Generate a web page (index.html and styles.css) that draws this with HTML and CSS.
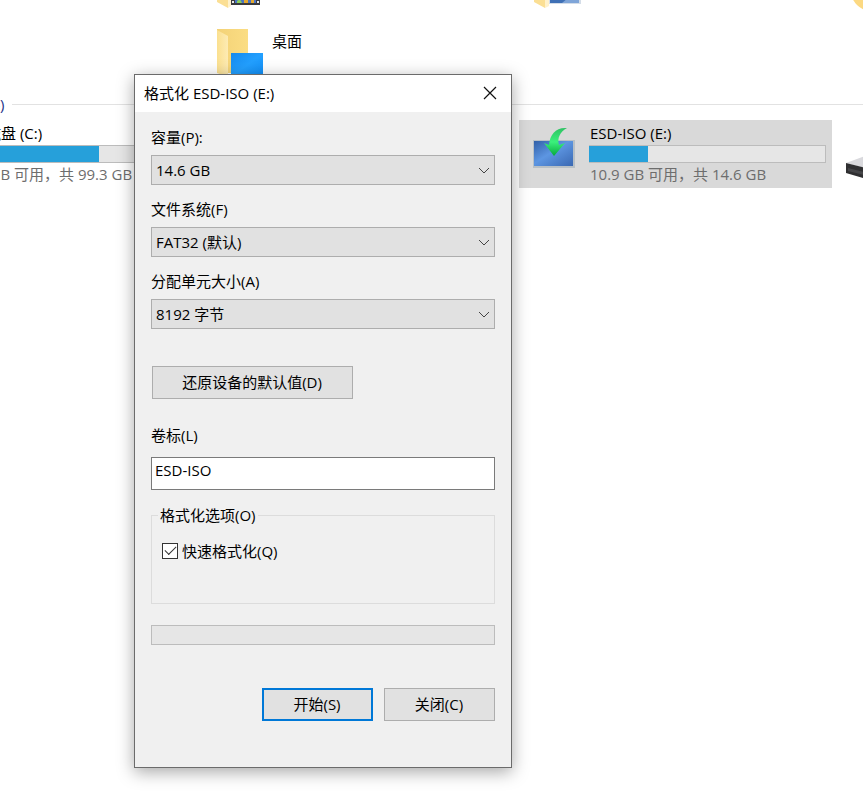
FILE: index.html
```html
<!DOCTYPE html>
<html lang="zh-CN">
<head>
  <meta charset="UTF-8" />
  <meta name="viewport" content="width=device-width, initial-scale=1.0"/>
  <title>格式化 ESD-ISO (E:)</title>
  <link rel="stylesheet" href="styles.css">
</head>
<body>
  <main class="explorer">
    <section class="tiles">
      <div class="tile col-2">
        <svg class="icon" viewBox="0 0 48 48">
          <path d="M0 0h32v40H0z" fill="#f7d778"/>
          <path d="M0 0l11 7v42L0 43z" fill="#fbdf94"/>
          <path d="M11 41h3v6l-3 2z" fill="#fff1cb"/>
          <path d="M14 24h29v22H14z" fill="#3a3a3c"/>
          <path d="M18 24h21v20H18z" fill="#4a74c4"/>
          <path d="M20 42l3-2 2 4h-5z" fill="#8fd05a"/>
          <path d="M27 40h4v4h-4zM34 40h3v4h-3z" fill="#e5a92c"/>
          <path d="M15 42h2v2h-2zM40 42h2v2h-2z" fill="#e8e8e8"/>
        </svg>
      </div>
      <div class="tile col-3">
        <svg class="icon" viewBox="0 0 48 48">
          <path d="M0 0h32v40H0z" fill="#f7d778"/>
          <path d="M0 0l11 7v42L0 43z" fill="#fbdf94"/>
          <path d="M11 41h4v6l-4 2z" fill="#fff1cb"/>
          <path d="M15 20h32v25H15z" fill="#d4dde8"/>
          <path d="M16 21h29v23H16z" fill="#3f70b5"/>
          <path d="M28 44l17-14v14z" fill="#7fa5d8"/>
        </svg>
      </div>
      <div class="tile col-4">
        <svg class="icon" viewBox="0 0 48 48">
          <circle cx="23" cy="29" r="24" fill="#fcd982"/>
        </svg>
      </div>
      <div class="tile col-2">
        <svg class="icon" viewBox="0 0 48 48">
          <defs>
            <linearGradient id="folder" x1="0" x2="1"><stop offset="0" stop-color="#f3d277"/><stop offset="1" stop-color="#fbdd83"/></linearGradient>
            <linearGradient id="flap" x1="0" x2="1"><stop offset="0" stop-color="#fbe08f"/><stop offset="1" stop-color="#fdebb4"/></linearGradient>
            <linearGradient id="desk" x1="0" y1="0" x2="1" y2="1"><stop offset="0" stop-color="#1689ec"/><stop offset=".5" stop-color="#23a0ff"/><stop offset="1" stop-color="#0f8cf5"/></linearGradient>
          </defs>
          <path d="M0 0h31v44H0z" fill="url(#folder)"/>
          <path d="M0 1l11 6v41L0 44z" fill="url(#flap)"/>
          <path d="M14 24h32v24H14z" fill="url(#desk)"/>
        </svg>
        <span class="name">桌面</span>
      </div>
    </section>

    <h2 class="group">设备和驱动器 (4)</h2>

    <section class="tiles">
      <div class="tile">
        <div class="info">
          <span class="name">本地磁盘 (C:)</span>
          <div class="bar"><div class="used" style="width: 61%"></div></div>
          <span class="free">38.6 GB 可用，共 99.3 GB</span>
        </div>
      </div>
      <div class="tile selected col-3">
        <svg class="icon" viewBox="0 0 48 48">
          <defs>
            <linearGradient id="screen" x1="0" y1="0" x2="1" y2="1"><stop offset="0" stop-color="#3160a8"/><stop offset=".45" stop-color="#5d96e2"/><stop offset="1" stop-color="#3a68b2"/></linearGradient>
            <linearGradient id="arrow" x1="0" y1="0" x2="0" y2="1"><stop offset="0" stop-color="#2fc263"/><stop offset=".5" stop-color="#3bf07c"/><stop offset="1" stop-color="#06a83c"/></linearGradient>
          </defs>
          <path d="M-1 10h42v28H-1z" fill="#b8c0c6"/>
          <path d="M0 11h39v25H0z" fill="url(#screen)"/>
          <path d="M33 -2C22 -3 16 4 15 15L10 13 20 26 31 13 25 15C23 8 26 2 33 -2z" fill="url(#arrow)"/>
        </svg>
        <div class="info">
          <span class="name">ESD-ISO (E:)</span>
          <div class="bar"><div class="used" style="width: 25%"></div></div>
          <span class="free">10.9 GB 可用，共 14.6 GB</span>
        </div>
      </div>
      <div class="tile col-4">
        <svg class="icon" viewBox="0 0 48 48">
          <path d="M-5 33L14 26h34v12H14z" fill="#d9d9dd"/>
          <path d="M-5 33l20 5v11L-5 43z" fill="#2f2f31"/>
          <path d="M-3 38l16 4v3L-3 41z" fill="#454548"/>
        </svg>
      </div>
    </section>
  </main>

  <form class="dialog" role="dialog" aria-labelledby="title">
    <header class="titlebar">
      <h1 id="title">格式化 ESD-ISO (E:)</h1>
      <button type="button" class="close" aria-label="关闭">
        <svg width="14" height="14" viewBox="0 0 14 14"><path d="M1 1l12 12M13 1L1 13" stroke="#111" stroke-width="1.2"/></svg>
      </button>
    </header>

    <div class="content">
      <div class="field">
        <label for="capacity">容量(P):</label>
        <div class="dropdown">
          <select id="capacity"><option>14.6 GB</option></select>
          <svg class="chevron" viewBox="0 0 12 8"><path d="M1 1l5 5 5-5"/></svg>
        </div>
      </div>
      <div class="field">
        <label for="filesystem">文件系统(F)</label>
        <div class="dropdown">
          <select id="filesystem"><option>FAT32 (默认)</option></select>
          <svg class="chevron" viewBox="0 0 12 8"><path d="M1 1l5 5 5-5"/></svg>
        </div>
      </div>
      <div class="field">
        <label for="unit">分配单元大小(A)</label>
        <div class="dropdown">
          <select id="unit"><option>8192 字节</option></select>
          <svg class="chevron" viewBox="0 0 12 8"><path d="M1 1l5 5 5-5"/></svg>
        </div>
      </div>

      <button type="button" class="btn restore">还原设备的默认值(D)</button>

      <div class="volume">
        <label for="volume">卷标(L)</label>
        <input type="text" id="volume" value="ESD-ISO" />
      </div>

      <fieldset>
        <legend>格式化选项(O)</legend>
        <div class="check">
          <input type="checkbox" id="quick" checked />
          <label for="quick">快速格式化(Q)</label>
        </div>
      </fieldset>

      <progress value="0" max="100" aria-label="格式化进度"></progress>

      <div class="actions">
        <button type="submit" class="btn primary">开始(S)</button>
        <button type="button" class="btn">关闭(C)</button>
      </div>
    </div>
  </form>
</body>
</html>
```

FILE: styles.css
```css
* {
  box-sizing: border-box;
}
body {
  margin: 0;
  min-height: 100vh;
  position: relative;
  overflow: hidden;
  background: #fff;
  color: #000;
  font: 15px/20px "Open Sans", "Noto Sans CJK SC", sans-serif;
}
button, input, select {
  font: inherit;
  color: inherit;
  margin: 0;
}

/* explorer window, scrolled a little down and right */
.explorer {
  margin: -51px 0 0 -115px;
}
.tiles {
  display: grid;
  grid-template-columns: repeat(4, 313px);
  gap: 2px 4px;
}
.tile {
  display: flex;
  height: 68px;
  padding: 3px 6px 3px 15px;
}
.col-2 { grid-column: 2; }
.col-3 { grid-column: 3; }
.col-4 { grid-column: 4; }
.selected {
  background: #d9d9d9;
}
.icon {
  flex: none;
  width: 48px;
  height: 48px;
  margin: 7px 7px 0 0;
  overflow: visible;
}
.tile > .name {
  padding-top: 9px;
}
.info {
  flex: 1;
}
.tile > .info:first-child {
  margin-left: 55px;
}
.info span {
  display: block;
  padding-left: 1px;
  white-space: nowrap;
}
.bar {
  height: 18px;
  margin: 2px 0 1px;
  border: 1px solid #bcbcbc;
  border-left: none;
  background: #e6e6e6;
}
.used {
  height: 100%;
  background: #26a0da;
}
.free {
  color: #6d6d6d;
}
.group {
  display: flex;
  align-items: center;
  gap: 8px;
  height: 33px;
  margin: 0;
  padding: 1px 0 0 8px;
  color: #1e3287;
  font-size: 15px;
  font-weight: normal;
}
.group::after {
  content: "";
  flex: 1;
  height: 1px;
  background: #e2e2e2;
}

/* format dialog */
.dialog {
  position: absolute;
  left: 134px;
  top: 74px;
  width: 378px;
  border: 1px solid #6b6b6b;
  background: #f0f0f0;
  box-shadow: 0 4px 16px rgba(0,0,0,0.35);
}
.titlebar {
  display: flex;
  align-items: center;
  justify-content: space-between;
  height: 37px;
  padding: 0 14px 2px 9px;
  background: #fff;
}
.titlebar h1 {
  margin: 0;
  font-size: 15px;
  font-weight: normal;
}
.close {
  display: flex;
  padding: 0;
  border: none;
  background: none;
}
.content {
  padding: 15px 16px 46px;
}
.field {
  display: grid;
  gap: 8px;
  margin-bottom: 14px;
}
.dropdown {
  position: relative;
}
select {
  appearance: none;
  display: block;
  width: 100%;
  height: 30px;
  padding: 0 4px;
  border: 1px solid #adadad;
  border-radius: 0;
  background: #e1e1e1;
}
.chevron {
  position: absolute;
  right: 5px;
  top: 12px;
  width: 12px;
  height: 8px;
  fill: none;
  stroke: #444;
  pointer-events: none;
}
.btn {
  width: 111px;
  height: 33px;
  padding: 0 1px 2px 0;
  border: 1px solid #adadad;
  background: #e1e1e1;
}
.restore {
  display: block;
  width: 201px;
  margin: 37px 1px 26px;
}
.primary {
  border: 2px solid #0078d7;
}
.volume {
  display: grid;
  gap: 12px;
  margin-bottom: 15px;
}
.volume input {
  width: 100%;
  height: 33px;
  padding: 0 3px 8px;
  border: 1px solid #7a7a7a;
  background: #fff;
}
fieldset {
  margin: 0;
  padding: 16px 10px 42px;
  border: 1px solid #dcdcdc;
}
legend {
  margin-left: -4px;
  padding: 0 2px;
}
.check {
  display: flex;
  align-items: center;
  gap: 4px;
}
.check input {
  appearance: none;
  display: grid;
  place-items: center;
  width: 16px;
  height: 16px;
  border: 1px solid #333;
  background: #fff;
}
.check input:checked::before {
  content: "";
  width: 10px;
  height: 5px;
  margin-bottom: 4px;
  border: solid #333;
  border-width: 0 0 1px 1px;
  transform: rotate(-45deg);
}
progress {
  appearance: none;
  display: block;
  width: 100%;
  height: 20px;
  margin: 21px 0 43px;
  border: 1px solid #bcbcbc;
  background: #e6e6e6;
}
progress::-webkit-progress-bar {
  background: #e6e6e6;
}
.actions {
  display: flex;
  justify-content: flex-end;
  gap: 11px;
}
```
